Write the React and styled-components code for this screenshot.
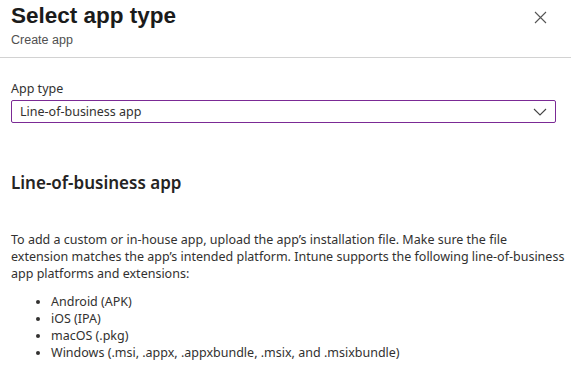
import styled, { createGlobalStyle } from "styled-components";

const GlobalStyle = createGlobalStyle`
  html, body {
    margin: 0;
    padding: 0;
    background: #ffffff;
  }
  body {
    font-family: "Noto Sans", "Open Sans", sans-serif;
    color: #323130;
  }
`;

const Panel = styled.div`
  width: 571px;
  height: 377px;
  overflow: hidden;
  background: #ffffff;
`;

const Header = styled.header`
  display: flex;
  justify-content: space-between;
  align-items: flex-start;
  padding: 2px 23px 0 11px;
  height: 55px;
  border-bottom: 1px solid #d2d2d2;
`;

const HeaderText = styled.div`
  display: flex;
  flex-direction: column;
`;

const Title = styled.h1`
  margin: 0;
  font-family: "Liberation Sans", Arial, sans-serif;
  font-size: 22.5px;
  font-weight: 700;
  line-height: 28px;
  color: #1b1b1b;
`;

const Subtitle = styled.div`
  font-family: "Liberation Sans", Arial, sans-serif;
  font-size: 12.5px;
  line-height: 16px;
  color: #505050;
  margin-top: 2px;
`;

const CloseButton = styled.button`
  border: 0;
  background: none;
  padding: 0;
  margin-top: 9px;
  width: 14px;
  height: 14px;
  display: flex;
  cursor: pointer;
`;

const Body = styled.main`
  padding: 22px 15px 0 11px;
`;

const Label = styled.label`
  display: block;
  font-size: 12.5px;
  line-height: 17px;
  color: #323130;
  margin-bottom: 3px;
`;

const Select = styled.div`
  display: flex;
  align-items: center;
  justify-content: space-between;
  height: 21px;
  border: 1px solid #7b2a95;
  border-radius: 2px;
  padding: 0 8px;
  font-size: 12.5px;
  color: #323130;
`;

const SectionTitle = styled.h2`
  margin: 49px 0 0 0;
  font-size: 17px;
  font-weight: 600;
  line-height: 22px;
  color: #252423;
`;

const Paragraph = styled.p`
  margin: 37px 0 0 0;
  font-size: 12.5px;
  line-height: 17px;
  color: #323130;
  white-space: nowrap;
`;

const List = styled.ul`
  margin: 11px 0 0 0;
  padding-left: 40px;
  font-size: 12.5px;
  line-height: 17px;
  color: #323130;
`;

const Item = styled.li``;

const Chevron = () => (
  <svg width="14" height="8" viewBox="0 0 14 8" fill="none">
    <path d="M1 1l6 6 6-6" stroke="#444" strokeWidth="1.1" />
  </svg>
);

const CloseIcon = () => (
  <svg width="13" height="13" viewBox="0 0 13 13" fill="none">
    <path d="M1 1l11 11M12 1L1 12" stroke="#555" strokeWidth="1.1" />
  </svg>
);

const platforms = [
  "Android (APK)",
  "iOS (IPA)",
  "macOS (.pkg)",
  "Windows (.msi, .appx, .appxbundle, .msix, and .msixbundle)",
];

export default function App() {
  return (
    <Panel>
      <GlobalStyle />
      <Header>
        <HeaderText>
          <Title>Select app type</Title>
          <Subtitle>Create app</Subtitle>
        </HeaderText>
        <CloseButton aria-label="Close">
          <CloseIcon />
        </CloseButton>
      </Header>
      <Body>
        <Label>App type</Label>
        <Select>
          <span>Line-of-business app</span>
          <Chevron />
        </Select>
        <SectionTitle>Line-of-business app</SectionTitle>
        <Paragraph>
          To add a custom or in-house app, upload the app’s installation file.
          Make sure the file
          <br />
          extension matches the app’s intended platform. Intune supports the
          following line-of-business
          <br />
          app platforms and extensions:
        </Paragraph>
        <List>
          {platforms.map((p) => (
            <Item key={p}>{p}</Item>
          ))}
        </List>
      </Body>
    </Panel>
  );
}
